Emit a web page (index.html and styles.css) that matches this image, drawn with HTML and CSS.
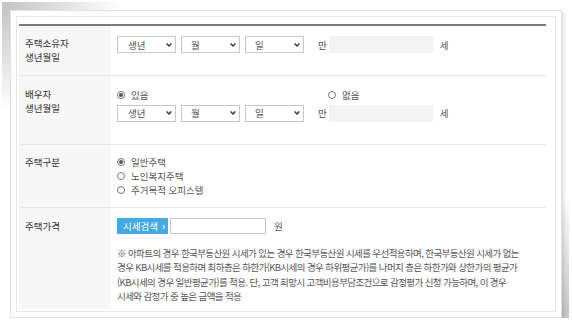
FILE: index.html
```html
<!DOCTYPE html>
<html lang="ko">
<head>
    <meta charset="UTF-8">
    <meta name="viewport" content="width=device-width, initial-scale=1.0">
    <title>주택정보 입력</title>
    <link rel="stylesheet" href="styles.css">
</head>
<body>
    <div class="frame">
        <div class="sheet">
            <table class="form_tbl">
                <tr class="row_owner">
                    <th>주택소유자<br>생년월일</th>
                    <td>
                        <div class="birth">
                            <div class="sel sel_year"><span>생년</span><svg width="6" height="4" viewBox="0 0 6 4"><path d="M0.6 0.6 L3 3 L5.4 0.6" /></svg></div>
                            <div class="sel"><span>월</span><svg width="6" height="4" viewBox="0 0 6 4"><path d="M0.6 0.6 L3 3 L5.4 0.6" /></svg></div>
                            <div class="sel"><span>일</span><svg width="6" height="4" viewBox="0 0 6 4"><path d="M0.6 0.6 L3 3 L5.4 0.6" /></svg></div>
                            <span class="unit_man">만</span>
                            <input type="text" class="age" readonly>
                            <span class="unit">세</span>
                        </div>
                    </td>
                </tr>
                <tr class="row_spouse">
                    <th>배우자<br>생년월일</th>
                    <td>
                        <div class="rdo_line">
                            <label class="rdo rdo_wide"><i class="on"></i>있음</label>
                            <label class="rdo"><i></i>없음</label>
                        </div>
                        <div class="birth">
                            <div class="sel sel_year"><span>생년</span><svg width="6" height="4" viewBox="0 0 6 4"><path d="M0.6 0.6 L3 3 L5.4 0.6" /></svg></div>
                            <div class="sel"><span>월</span><svg width="6" height="4" viewBox="0 0 6 4"><path d="M0.6 0.6 L3 3 L5.4 0.6" /></svg></div>
                            <div class="sel"><span>일</span><svg width="6" height="4" viewBox="0 0 6 4"><path d="M0.6 0.6 L3 3 L5.4 0.6" /></svg></div>
                            <span class="unit_man">만</span>
                            <input type="text" class="age" readonly>
                            <span class="unit">세</span>
                        </div>
                    </td>
                </tr>
                <tr class="row_type">
                    <th>주택구분</th>
                    <td>
                        <label class="rdo rdo_block"><i class="on"></i>일반주택</label>
                        <label class="rdo rdo_block"><i></i>노인복지주택</label>
                        <label class="rdo rdo_block"><i></i>주거목적 오피스텔</label>
                    </td>
                </tr>
                <tr class="row_price">
                    <th>주택가격</th>
                    <td>
                        <div class="price">
                            <span class="btn_search">시세검색 <b>›</b></span>
                            <input type="text" class="price_input">
                            <span class="unit">원</span>
                        </div>
                        <p class="note">※ 아파트의 경우 한국부동산원 시세가 있는 경우 한국부동산원 시세를 우선적용하며, 한국부동산원 시세가 없는<br>경우 KB시세를 적용하며 최하층은 하한가(KB시세의 경우 하위평균가)를 나머지 층은 하한가와 상한가의 평균가<br>(KB시세의 경우 일반평균가)를 적용. 단, 고객 희망시 고객비용부담조건으로 감정평가 신청 가능하며, 이 경우<br>시세와 감정가 중 높은 금액을 적용</p>
                    </td>
                </tr>
            </table>
        </div>
    </div>
</body>
</html>
```

FILE: styles.css
```css
*{
    box-sizing:border-box;
}
body{
    margin:0;
    background:#fff;
    font-family:"Noto Sans CJK KR", "Noto Sans", sans-serif;
    font-size:9.5px;
    color:#555;
}
/* 종이 느낌 바깥 틀 */
.frame{
    position:relative;
    width:552px;
    height:308px;
    margin:10px 0 0 10px;
    padding:5px;
    border:1px solid #e2e2e2;
    background:#fff;
    box-shadow:2px 2px 3px rgba(0,0,0,.12);
}
.frame::before{
    content:"";
    position:absolute;
    top:-9px;
    left:-9px;
    width:120px;
    height:110px;
    background:radial-gradient(ellipse at 0 0, rgba(0,0,0,.24), rgba(0,0,0,0) 70%);
    z-index:-1;
}
.frame::after{
    content:"";
    position:absolute;
    right:-8px;
    bottom:-7px;
    width:90px;
    height:130px;
    background:radial-gradient(ellipse at 100% 100%, rgba(0,0,0,.25), rgba(0,0,0,0) 70%);
    z-index:-1;
}
.sheet{
    height:296px;
    padding:7px 9px 0 2px;
    border:1px solid #e6e6e6;
}
.form_tbl{
    width:100%;
    border-collapse:collapse;
    border-top:2px solid #7a7a7a;
}
.form_tbl th{
    width:92px;
    padding:10px 0 0 6px;
    background:#f7f7f7;
    border-bottom:1px solid #e8e8e8;
    text-align:left;
    vertical-align:top;
    font-weight:normal;
    line-height:14px;
    color:#333;
}
.form_tbl td{
    padding:10px 0 0 6px;
    border-bottom:1px solid #e8e8e8;
    vertical-align:top;
    line-height:14px;
}
.row_owner{
    height:50px;
}
.row_spouse{
    height:69px;
}
.row_spouse th{
    padding-top:11px;
}
.row_spouse td{
    padding-top:12px;
}
.row_type{
    height:63px;
}
.row_price{
    height:102px;
}
.row_price th{
    padding-top:11px;
}
.row_price th,
.row_price td{
    border-bottom:none;
}
.birth{
    display:flex;
    align-items:center;
    gap:5px;
}
.sel{
    display:flex;
    align-items:center;
    justify-content:space-between;
    width:59px;
    height:17px;
    padding:0 3px 0 9px;
    border:1px solid #c9c9c9;
    background:#fff;
    color:#555;
}
.sel_year{
    padding-left:10px;
}
.sel svg path{
    fill:none;
    stroke:#333;
    stroke-width:1.4;
}
.unit_man{
    margin-left:9px;
}
.age{
    width:104px;
    height:17px;
    margin:0 0 0 -3px;
    border:none;
    background:#f3f3f3;
    outline:none;
}
.unit{
    margin-left:2px;
}
.rdo_line{
    display:flex;
    margin-bottom:3px;
}
.rdo{
    display:inline-flex;
    align-items:center;
    gap:6px;
}
.rdo_wide{
    width:211px;
}
.rdo_block{
    display:flex;
}
.rdo i{
    display:inline-flex;
    align-items:center;
    justify-content:center;
    width:8px;
    height:8px;
    border:1px solid #777;
    border-radius:50%;
    background:#fff;
}
.rdo i.on::after{
    content:"";
    width:4px;
    height:4px;
    border-radius:50%;
    background:#555;
}
.price{
    display:flex;
    align-items:center;
}
.btn_search{
    display:inline-flex;
    align-items:center;
    width:51px;
    height:16px;
    padding-left:6px;
    background:#45a9e3;
    color:#fff;
}
.btn_search b{
    margin-left:4px;
    font-weight:bold;
}
.price_input{
    width:96px;
    height:16px;
    margin:0 6px 0 2px;
    border:1px solid #c4c4c4;
    background:#fff;
    outline:none;
}
.note{
    margin:12px 0 0;
    line-height:14.5px;
    letter-spacing:-0.6px;
    color:#555;
    white-space:nowrap;
}
```
